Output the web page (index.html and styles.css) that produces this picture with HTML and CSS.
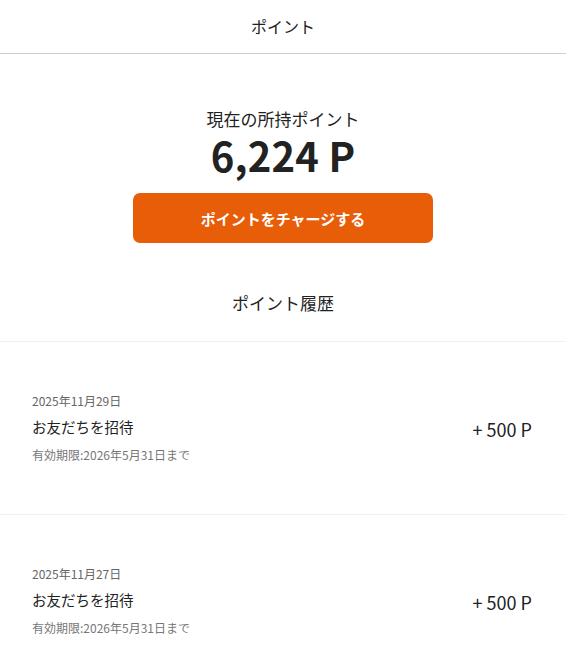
FILE: index.html
```html
<!DOCTYPE html>
<html lang="ja">
<head>
<meta charset="utf-8">
<link rel="stylesheet" href="styles.css">
</head>
<body>
<header class="header"><h1 class="header-title">ポイント</h1></header>
<section class="balance">
  <p class="balance-label">現在の所持ポイント</p>
  <p class="balance-value">6,224 P</p>
  <button class="charge-btn">ポイントをチャージする</button>
  <h2 class="history-title">ポイント履歴</h2>
</section>
<ul class="history">
  <li class="item">
    <div class="item-info">
      <p class="item-date">2025年11月29日</p>
      <p class="item-name">お友だちを招待</p>
      <p class="item-exp">有効期限:2026年5月31日まで</p>
    </div>
    <p class="item-amount">+ 500 P</p>
  </li>
  <li class="item">
    <div class="item-info">
      <p class="item-date">2025年11月27日</p>
      <p class="item-name">お友だちを招待</p>
      <p class="item-exp">有効期限:2026年5月31日まで</p>
    </div>
    <p class="item-amount">+ 500 P</p>
  </li>
</ul>
</body>
</html>
```
FILE: styles.css
```css
* { box-sizing: border-box; }
body {
  margin: 0;
  background: #fff;
  color: #222;
  font-family: "Noto Sans CJK JP", "Noto Sans", sans-serif;
}
p, h1, h2, ul { margin: 0; padding: 0; }
.header {
  height: 54px;
  border-bottom: 1px solid #cfcfcf;
  display: flex;
  align-items: center;
  justify-content: center;
}
.header-title {
  font-size: 16px;
  font-weight: 400;
  line-height: 1;
  margin-bottom: 2px;
}
.balance {
  display: flex;
  flex-direction: column;
  align-items: center;
  padding-top: 53px;
}
.balance-label {
  font-size: 17px;
  line-height: 24px;
}
.balance-value {
  font-size: 40px;
  font-weight: 700;
  line-height: 44px;
  margin-top: 2px;
  letter-spacing: 0.2px;
}
.charge-btn {
  margin-top: 16px;
  width: 300px;
  height: 50px;
  border: none;
  border-radius: 7px;
  background: #e85d08;
  color: #fff;
  font-family: inherit;
  font-size: 15px;
  font-weight: 700;
}
.history-title {
  margin-top: 48px;
  font-size: 17px;
  font-weight: 400;
  line-height: 24px;
}
.history {
  list-style: none;
  margin-top: 26px;
  border-top: 1px solid #f0f0f0;
}
.item {
  height: 173px;
  border-bottom: 1px solid #f0f0f0;
  display: flex;
  align-items: center;
  justify-content: space-between;
  padding: 0 34px 0 32px;
}
.item-info { display: flex; flex-direction: column; }
.item-date {
  font-size: 12px;
  color: #666;
  line-height: 18px;
}
.item-name {
  font-size: 14.5px;
  line-height: 22px;
  margin-top: 6px;
}
.item-exp {
  font-size: 12px;
  color: #777;
  line-height: 18px;
  margin-top: 8px;
}
.item-amount {
  font-size: 18px;
  line-height: 24px;
  margin-top: 2px;
}
```
